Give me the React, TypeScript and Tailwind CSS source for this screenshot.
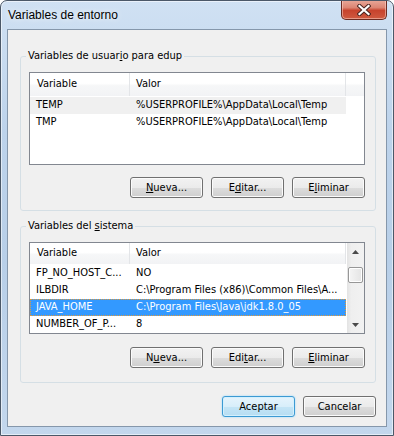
import React from "react";

type Row = { name: string; value: string; sel?: "inactive" | "active" };

const userVars: Row[] = [
  { name: "TEMP", value: "%USERPROFILE%\\AppData\\Local\\Temp", sel: "inactive" },
  { name: "TMP", value: "%USERPROFILE%\\AppData\\Local\\Temp" },
];

const systemVars: Row[] = [
  { name: "FP_NO_HOST_C...", value: "NO" },
  { name: "ILBDIR", value: "C:\\Program Files (x86)\\Common Files\\A..." },
  { name: "JAVA_HOME", value: "C:\\Program Files\\Java\\jdk1.8.0_05", sel: "active" },
  { name: "NUMBER_OF_P...", value: "8" },
];

const Btn = ({ children, primary }: { children: React.ReactNode; primary?: boolean }) => {
  return (
    <button
      className={
        primary
          ? "h-[21px] w-[73px] rounded-[3px] border border-[#3c9ad3] bg-[linear-gradient(#e6f4fc_0%,#d8eefa_50%,#c4e5f6_50%,#b6ddf2_100%)] text-[11px] leading-none text-black shadow-[0_0_2px_#8fd6ff,inset_0_0_0_1px_#d4f0fd]"
          : "h-[21px] w-[73px] rounded-[3px] border border-[#707070] bg-[linear-gradient(#f2f2f2_0%,#ebebeb_50%,#dddddd_50%,#cfcfcf_100%)] text-[11px] leading-none text-black shadow-[inset_0_0_0_1px_#fbfbfb]"
      }
    >
      {children}
    </button>
  );
};

const HeaderCell = ({ label, w, pl }: { label: string; w: string; pl: string }) => (
  <div className={`${w} ${pl} flex items-center border-r border-[#e3e5e8]`}>{label}</div>
);

const EnvList = ({ rows, scroll, h }: { rows: Row[]; scroll?: boolean; h: string }) => {
  return (
    <div className={`${h} ml-[8px] flex w-[336px] overflow-hidden border border-[#828790] bg-white`}>
      <div className="flex flex-1 flex-col">
        <div className="flex h-[23px] bg-[linear-gradient(#ffffff_0%,#ffffff_45%,#f6f7f8_55%,#f2f3f5_100%)]">
          <div className="flex w-[100px] items-center border-r border-[#e3e5e8] pl-[7px]">Variable</div>
          <div className="flex w-[216px] items-center border-r border-[#e3e5e8] pl-[6px]">Valor</div>
          <div className="flex-1" />
        </div>
        <div className="pt-[1px]">
          {rows.map((r) => (
            <div
              key={r.name}
              className={
                r.sel === "active"
                  ? "flex h-[17px] w-[316px] items-center bg-[#3399ff] text-white outline outline-1 -outline-offset-1 outline-dotted outline-[#e09a3c]"
                  : r.sel === "inactive"
                  ? "flex h-[17px] w-[316px] items-center bg-[#f0f0f0]"
                  : "flex h-[17px] w-[316px] items-center"
              }
            >
              <div className="w-[100px] truncate whitespace-nowrap pl-[6px]">{r.name}</div>
              <div className="w-[216px] truncate whitespace-nowrap pl-[6px]">{r.value}</div>
            </div>
          ))}
        </div>
      </div>
      {scroll && (
        <div className="ml-[1px] flex w-[17px] flex-col bg-[linear-gradient(90deg,#e3e3e3,#efefef_25%,#f2f2f2)]">
          <div className="flex h-[17px] items-center justify-center">
            <svg width="7" height="4" viewBox="0 0 7 4">
              <path d="M0 4 L3.5 0 L7 4 Z" fill="#4a4a4a" />
            </svg>
          </div>
          <div className="flex-1 px-[1px] pt-[7px]">
            <div className="h-[16px] rounded-[2px] border border-[#979797] bg-[linear-gradient(90deg,#f5f5f5,#e4e4e4)] shadow-[inset_0_0_0_1px_#ffffff]" />
          </div>
          <div className="flex h-[17px] items-center justify-center">
            <svg width="7" height="4" viewBox="0 0 7 4">
              <path d="M0 0 L7 0 L3.5 4 Z" fill="#4a4a4a" />
            </svg>
          </div>
        </div>
      )}
    </div>
  );
};

export default function App() {
  return (
    <div className="flex h-[436px] w-[394px] flex-col overflow-hidden rounded-t-[7px] border border-[#4b5868] bg-[linear-gradient(180deg,#d0e1f3_0%,#bdd3eb_30%,#b8cfe8_60%,#c3d7ed_100%)] px-[6px] pb-[8px] font-['DejaVu_Sans_Condensed','Liberation_Sans',sans-serif] text-[11px] text-black shadow-[inset_0_0_0_1px_rgba(255,255,255,0.55)]">
      <div className="flex h-[28px] items-start justify-between">
        <span className="ml-[1px] pt-[7px] font-['Liberation_Sans',sans-serif] text-[12px] leading-[14px] [text-shadow:0_0_6px_#ffffff]">
          Variables de entorno
        </span>
        <button className="-mt-[1px] flex h-[20px] w-[46px] items-center justify-center rounded-b-[5px] border border-t-0 border-[#6b2b22] bg-[linear-gradient(#e9a99a_0%,#dc8573_40%,#c7432d_55%,#cf5a40_100%)] shadow-[inset_0_0_0_1px_rgba(255,220,210,0.5)]">
          <svg width="14" height="12" viewBox="0 0 14 12">
            <path d="M2.5 2 L11.5 10 M11.5 2 L2.5 10" stroke="#4a2520" strokeWidth="4.2" strokeLinecap="square" />
            <path d="M2.5 2 L11.5 10 M11.5 2 L2.5 10" stroke="#ffffff" strokeWidth="2.2" strokeLinecap="square" />
          </svg>
        </button>
      </div>

      <div className="flex flex-1 flex-col border border-[#8597ab] bg-[#f0f0f0]">
        <fieldset className="ml-[12px] mt-[19px] w-[356px] rounded-[3px] border border-[#d5dfe5] pb-[12px]">
          <legend className="ml-[5px] px-[2px] leading-[14px]">
            Variables de usuar<span className="underline">i</span>o para edup
          </legend>
          <div className="mt-[9px]">
            <EnvList rows={userVars} h="h-[93px]" />
          </div>
          <div className="mt-[12px] flex justify-end gap-[8px] pr-[10px]">
            <Btn>
              <span className="underline">N</span>ueva...
            </Btn>
            <Btn>
              E<span className="underline">d</span>itar...
            </Btn>
            <Btn>
              E<span className="underline">l</span>iminar
            </Btn>
          </div>
        </fieldset>

        <fieldset className="ml-[12px] mt-[8px] w-[356px] rounded-[3px] border border-[#d5dfe5] pb-[14px]">
          <legend className="ml-[5px] px-[2px] leading-[14px]">
            Variables del <span className="underline">s</span>istema
          </legend>
          <div className="mt-[9px]">
            <EnvList rows={systemVars} h="h-[92px]" scroll />
          </div>
          <div className="mt-[13px] flex justify-end gap-[8px] pr-[10px]">
            <Btn>
              N<span className="underline">u</span>eva...
            </Btn>
            <Btn>
              Edi<span className="underline">t</span>ar...
            </Btn>
            <Btn>
              <span className="underline">E</span>liminar
            </Btn>
          </div>
        </fieldset>

        <div className="mt-[13px] flex justify-end gap-[8px] pr-[10px]">
          <Btn primary>Aceptar</Btn>
          <Btn>Cancelar</Btn>
        </div>
      </div>
    </div>
  );
}
